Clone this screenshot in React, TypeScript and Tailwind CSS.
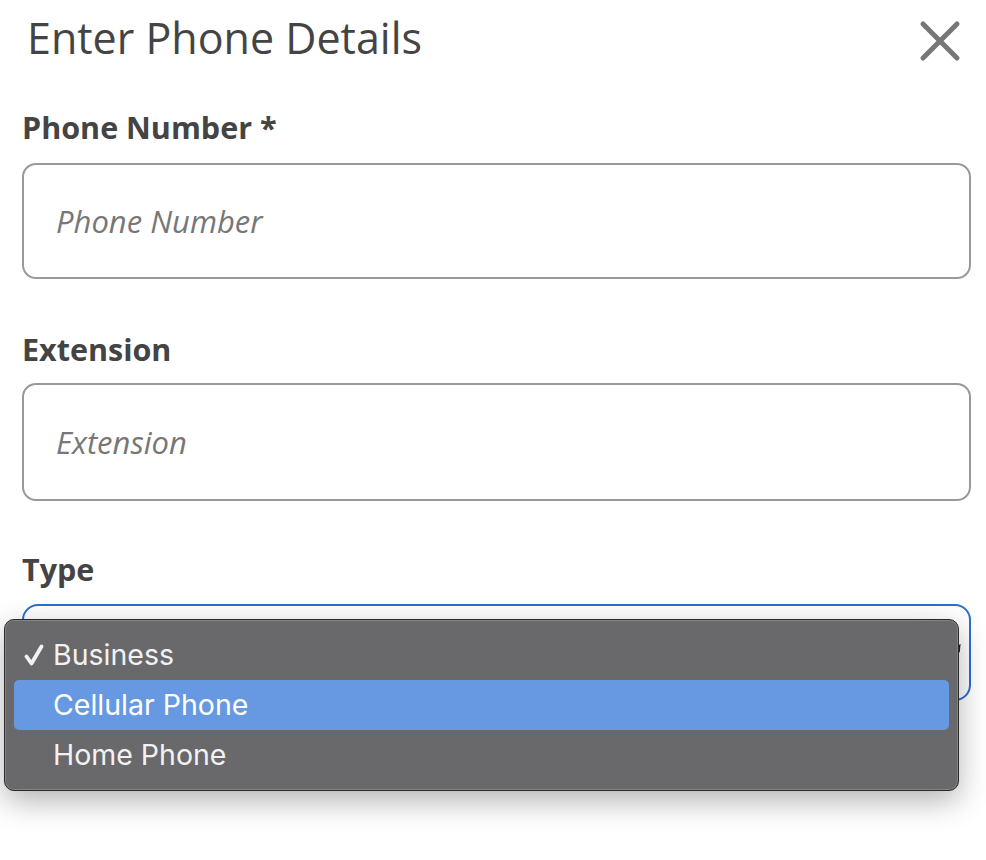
const options = ["Business", "Cellular Phone", "Home Phone"];

const App = () => {
  return (
    <div className="w-[986px] h-[860px] bg-white relative overflow-hidden font-['Open_Sans',sans-serif] text-[#444]">
      <div className="pl-[22px] pr-[15px]">
        {/* Header */}
        <div className="flex items-start justify-between pt-[12px]">
          <h1 className="ml-[5px] text-[43px] leading-[52px] font-['Open_Sans',sans-serif] text-[#444]">
            Enter Phone Details
          </h1>
          <button className="mt-[8px] mr-[10px] text-[#777]">
            <svg width="42" height="42" viewBox="0 0 42 42">
              <path
                d="M4 4L38 38M38 4L4 38"
                stroke="currentColor"
                strokeWidth="5"
                strokeLinecap="round"
              />
            </svg>
          </button>
        </div>

        {/* Phone Number */}
        <label className="block mt-[43px] text-[30.5px] leading-[40px] font-bold">
          Phone Number *
        </label>
        <div className="mt-[16px] h-[116px] rounded-[14px] border-2 border-[#999] flex items-center px-[32px]">
          <span className="italic text-[31px] text-[#777]">Phone Number</span>
        </div>

        {/* Extension */}
        <label className="block mt-[50px] text-[30.5px] leading-[40px] font-bold">
          Extension
        </label>
        <div className="mt-[14px] h-[118px] rounded-[14px] border-2 border-[#999] flex items-center px-[32px]">
          <span className="italic text-[31px] text-[#777]">Extension</span>
        </div>

        {/* Type */}
        <label className="block mt-[48px] text-[30.5px] leading-[40px] font-bold">
          Type
        </label>
        <div className="mt-[15px] h-[97px] rounded-[16px] border-2 border-[#2a6fd0] relative">
          <span className="absolute right-[6px] top-[40px] w-0 h-0 border-l-[5px] border-r-[5px] border-t-[7px] border-l-transparent border-r-transparent border-t-[#222] rotate-[-30deg]" />
        </div>
      </div>

      {/* Native-style dropdown menu */}
      <div className="absolute left-[4px] top-[619px] w-[955px] h-[172px] rounded-[10px] bg-[#69696b] border border-[#2a2a2a] shadow-[0_10px_30px_rgba(0,0,0,0.3),inset_0_0_0_1px_rgba(255,255,255,0.18)] px-[9px] pt-[10px] font-['Inter',sans-serif] text-[28.5px] text-[#f2f2f2]">
        {options.map((opt, i) => (
          <div
            key={opt}
            className={`h-[50px] flex items-center rounded-[5px] ${
              i === 1 ? "bg-[#6699e1] text-white" : ""
            }`}
          >
            <span className="w-[39px] flex justify-start pl-[10px]">
              {i === 0 && (
                <svg width="20" height="22" viewBox="0 0 20 22">
                  <path
                    d="M2.5 12.5L7.5 19.5L17.5 2.5"
                    fill="none"
                    stroke="currentColor"
                    strokeWidth="3.8"
                    strokeLinecap="round"
                    strokeLinejoin="round"
                  />
                </svg>
              )}
            </span>
            <span>{opt}</span>
          </div>
        ))}
      </div>
    </div>
  );
};

export default App;
